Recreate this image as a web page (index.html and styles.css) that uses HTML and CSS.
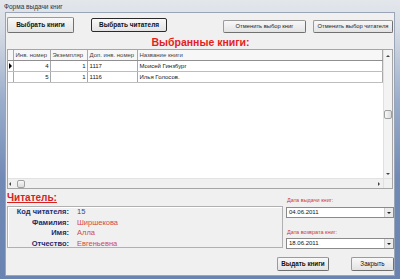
FILE: index.html
```html
<!DOCTYPE html>
<html lang="ru">
<head>
<meta charset="utf-8">
<title>Форма выдачи книг</title>
<link rel="stylesheet" href="styles.css">
</head>
<body>
<div class="window">
  <div class="titlebar">Форма выдачи книг</div>
  <div class="client">
    <div class="toolbar">
      <button class="btn btn-bold btn-books">Выбрать книги</button>
      <button class="btn btn-bold btn-reader">Выбрать читателя</button>
      <button class="btn btn-cancel-books">Отменить выбор книг</button>
      <button class="btn btn-cancel-reader">Отменить выбор читателя</button>
    </div>
    <div class="heading">Выбранные книги:</div>
    <div class="grid">
      <div class="grid-data">
        <table class="data">
          <colgroup>
            <col class="c-ind"><col class="c-inv"><col class="c-copy"><col class="c-extra"><col>
          </colgroup>
          <thead>
            <tr><th class="ind"></th><th>Инв. номер</th><th>Экземпляр</th><th>Доп. инв. номер</th><th>Название книги</th></tr>
          </thead>
          <tbody>
            <tr><td class="ind"><span class="cur"></span></td><td class="num">4</td><td class="num">1</td><td>1117</td><td>Моисей Гинзбург</td></tr>
            <tr><td class="ind"></td><td class="num">5</td><td class="num">1</td><td>1116</td><td>Илья Голосов.</td></tr>
          </tbody>
        </table>
      </div>
      <div class="vscroll">
        <span class="arr-up"></span>
        <span class="vthumb"></span>
        <span class="arr-down v-down"></span>
      </div>
      <div class="hscroll">
        <span class="arr-left"></span>
        <span class="hthumb"></span>
        <span class="arr-right"></span>
      </div>
      <div class="corner"></div>
    </div>
    <div class="bottom">
      <div class="reader">
        <div class="reader-title">Читатель:</div>
        <div class="reader-panel">
          <span class="lbl">Код читателя:</span><span class="val val-code">15</span>
          <span class="lbl">Фамилия:</span><span class="val">Ширшекова</span>
          <span class="lbl">Имя:</span><span class="val">Алла</span>
          <span class="lbl">Отчество:</span><span class="val">Евгеньевна</span>
        </div>
      </div>
      <div class="dates">
        <div class="date-label">Дата выдачи книг:</div>
        <div class="combo"><span class="combo-text">04.06.2011</span><span class="combo-btn"><span class="arr-down"></span></span></div>
        <div class="date-label date-label-second">Дата возврата книг:</div>
        <div class="combo combo-second"><span class="combo-text">18.06.2011</span><span class="combo-btn"><span class="arr-down"></span></span></div>
      </div>
    </div>
    <div class="footer">
      <button class="btn btn-bold btn-issue">Выдать книги</button>
      <button class="btn btn-close">Закрыть</button>
    </div>
  </div>
</div>
</body>
</html>
```

FILE: styles.css
```css
body {
  margin: 0;
  font-family: "Liberation Sans", Arial, sans-serif;
}

.window {
  width: 400px;
  height: 279px;
  box-sizing: border-box;
  padding: 0 6px 4px 6px;
  display: flex;
  flex-direction: column;
  background: linear-gradient(180deg, #e3e7ec 0px, #d6dce5 30px, #9aadcb 100px, #7089b5 180px, #6a84b1 279px);
}

.titlebar {
  flex: none;
  height: 13px;
  line-height: 13px;
  font-size: 6.5px;
  color: #333;
  margin-left: -2px;
}

.client {
  flex: 1;
  min-height: 0;
  background: #f0f0f0;
  display: flex;
  flex-direction: column;
  padding-left: 1px;
  box-shadow: 0 0 0 1px #9aa6b8;
}

.toolbar {
  flex: none;
  display: flex;
  align-items: flex-start;
  height: 23px;
  padding-top: 4px;
  box-sizing: border-box;
}

.btn {
  font-family: inherit;
  font-size: 6.5px;
  line-height: 1;
  padding: 0;
  color: #111;
  background: linear-gradient(#f8f8f8, #e3e3e3);
  border: 1px solid #9a9a9a;
  border-right-color: #707070;
  border-bottom-color: #707070;
  border-radius: 2px;
  box-sizing: border-box;
  white-space: nowrap;
  overflow: hidden;
}

.btn-bold { font-weight: bold; }

.btn-books { width: 67px; height: 16px; }
.btn-reader { width: 76px; height: 14px; margin: 1px 0 0 17px; border-color: #2a2a2a; }
.btn-cancel-books { width: 83px; height: 13px; margin: 3px 0 0 auto; font-size: 5.8px; color: #222; }
.btn-cancel-reader { width: 80px; height: 13px; margin: 3px 1px 0 7px; font-size: 5.8px; color: #222; }

.heading {
  flex: none;
  height: 13px;
  line-height: 13px;
  text-align: center;
  font-size: 10.5px;
  font-weight: bold;
  color: #e41e1e;
}

.grid {
  flex: none;
  width: 386px;
  height: 140px;
  box-sizing: border-box;
  border: 1px solid #a5a5a5;
  background: #fff;
  display: grid;
  grid-template-columns: 1fr 9px;
  grid-template-rows: 1fr 10px;
}

.grid-data { overflow: hidden; }

.data {
  border-collapse: collapse;
  table-layout: fixed;
  width: 100%;
  font-size: 6px;
  color: #151515;
}

.c-ind { width: 5px; }
.c-inv { width: 37px; }
.c-copy { width: 37px; }
.c-extra { width: 50px; }

.data th,
.data td {
  height: 10px;
  padding: 0 1px 0 2px;
  line-height: 10px;
  border-right: 1px solid #a8a8a8;
  border-bottom: 1px solid #bdbdbd;
  white-space: nowrap;
  overflow: hidden;
  text-align: left;
  font-weight: normal;
}

.data th {
  background: #f7f7f7;
  border-bottom-color: #8f8f8f;
  color: #444;
}

.data .num { text-align: right; }
.data .ind { padding: 0; }

.cur {
  display: inline-block;
  vertical-align: middle;
  margin-left: 1px;
  width: 0;
  height: 0;
  border-top: 3px solid transparent;
  border-bottom: 3px solid transparent;
  border-left: 3px solid #000;
}

.vscroll {
  background: #f3f3f3;
  border-left: 1px solid #e0e0e0;
  display: flex;
  flex-direction: column;
  align-items: center;
}

.arr-up {
  width: 0;
  height: 0;
  margin-top: 5px;
  border-left: 2px solid transparent;
  border-right: 2px solid transparent;
  border-bottom: 2px solid #444;
}

.vthumb {
  width: 8px;
  height: 9px;
  margin-top: 53px;
  box-sizing: border-box;
  border: 1px solid #a0a0a0;
  border-radius: 2px;
  background: linear-gradient(90deg, #f8f8f8, #dcdcdc);
}

.arr-down {
  width: 0;
  height: 0;
  border-left: 2px solid transparent;
  border-right: 2px solid transparent;
  border-top: 2px solid #222;
}

.v-down {
  margin-top: auto;
  margin-bottom: 3px;
  border-top-color: #444;
}

.hscroll {
  background: #f0f0f0;
  border-top: 1px solid #e2e2e2;
  display: flex;
  align-items: center;
}

.arr-left {
  width: 0;
  height: 0;
  margin-left: 1px;
  border-top: 2px solid transparent;
  border-bottom: 2px solid transparent;
  border-right: 2px solid #444;
}

.hthumb {
  width: 8px;
  height: 8px;
  margin-left: 6px;
  box-sizing: border-box;
  border: 1px solid #a0a0a0;
  border-radius: 2px;
  background: linear-gradient(#f8f8f8, #dcdcdc);
}

.arr-right {
  width: 0;
  height: 0;
  margin-left: auto;
  margin-right: 3px;
  border-top: 2px solid transparent;
  border-bottom: 2px solid transparent;
  border-left: 2px solid #444;
}

.corner {
  background: #f0f0f0;
  border-top: 1px solid #e2e2e2;
  border-left: 1px solid #e0e0e0;
}

.bottom {
  flex: none;
  display: grid;
  grid-template-columns: 276px 108px;
  column-gap: 3px;
}

.reader-title {
  margin-top: 2px;
  height: 13px;
  line-height: 13px;
  font-size: 10px;
  font-weight: bold;
  color: #d81f1f;
  text-decoration: underline;
}

.reader-panel {
  margin-top: 2px;
  height: 42px;
  box-sizing: border-box;
  border: 1px solid #b0b0b0;
  box-shadow: inset 1px 1px 0 #fff;
  display: grid;
  grid-template-columns: 61px 1fr;
  column-gap: 8px;
  grid-auto-rows: 10.7px;
  align-content: start;
  font-size: 7.5px;
  line-height: 10.7px;
}

.lbl {
  text-align: right;
  font-weight: bold;
  color: #1f2c6c;
}

.val { color: #d2494b; }
.val-code { color: #2c4a9e; }

.dates { padding-top: 7px; }

.date-label {
  height: 8px;
  line-height: 8px;
  font-size: 5.5px;
  color: #c83a3a;
  padding-left: 1px;
}

.date-label-second { margin-top: 10px; }

.combo {
  margin-top: 3px;
  height: 11px;
  box-sizing: border-box;
  border: 1px solid #8a8a8a;
  background: #fff;
  display: flex;
  font-size: 6px;
  color: #111;
}

.combo-second { margin-top: 2px; }

.combo-text {
  flex: 1;
  padding-left: 2px;
  line-height: 9px;
}

.combo-btn {
  width: 8px;
  background: #ececec;
  border-left: 1px solid #cfcfcf;
  display: flex;
  align-items: center;
  justify-content: center;
}

.footer {
  flex: none;
  display: flex;
  justify-content: flex-end;
  gap: 22px;
  margin-top: 8px;
}

.btn-issue { width: 52px; height: 14px; font-size: 6.3px; }
.btn-close { width: 43px; height: 14px; font-size: 6.3px; }
```
